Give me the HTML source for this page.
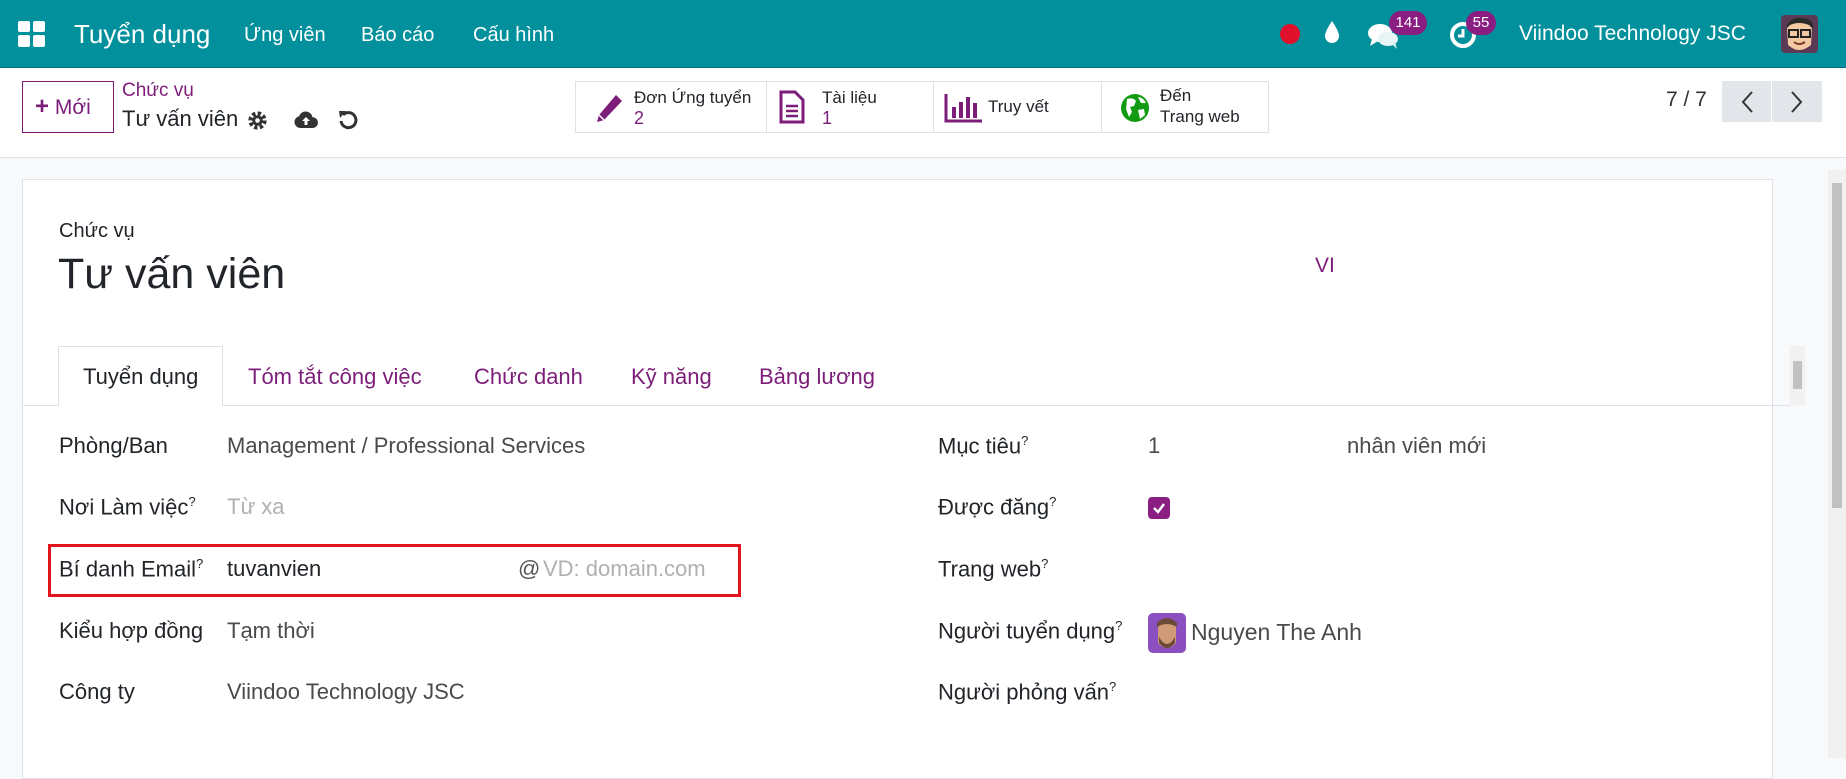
<!DOCTYPE html>
<html><head><meta charset="utf-8">
<style>
*{box-sizing:border-box;margin:0;padding:0}
body{width:1846px;height:758px;overflow:hidden;background:#f8f9fa;font-family:"Liberation Sans","Noto Sans CJK JP",sans-serif;color:#212529;position:relative}
.a{position:absolute;white-space:nowrap}
.nav{position:absolute;left:0;top:0;width:1846px;height:68px;background:#01909c;border-bottom:1px solid #0a6e77}
.nav .a{color:#fff}
.cp{position:absolute;left:0;top:68px;width:1846px;height:90px;background:#fff;border-bottom:1px solid #dee2e6}
.badge{position:absolute;background:#8a1d82;color:#fff;border-radius:12px;font-size:15px;text-align:center;height:24px;line-height:24px}
.stat{position:absolute;top:81px;height:52px;border:1px solid #dee2e6;background:#fff}
.stat .t{position:absolute;font-size:17px;color:#212529;white-space:nowrap}
.stat .n{position:absolute;font-size:18px;color:#7c1d7a}
.sheet{position:absolute;left:22px;top:179px;width:1751px;height:600px;background:#fff;border:1px solid #dee2e6}
.lbl{position:absolute;font-size:22px;color:#212529;white-space:nowrap}
.lbl sup{font-size:13px}
.val{position:absolute;font-size:22px;color:#4a4a4a;white-space:nowrap}
.tab{position:absolute;top:364px;font-size:22px;color:#7c1d7a;white-space:nowrap}
</style></head><body>
<div class="nav">
 <svg class="a" style="left:18px;top:21px" width="27" height="26" viewBox="0 0 27 26"><rect x="0" y="0" width="12" height="11" rx="2" fill="#fff"/><rect x="15" y="0" width="12" height="11" rx="2" fill="#fff"/><rect x="0" y="14" width="12" height="12" rx="2" fill="#fff"/><rect x="15" y="14" width="12" height="12" rx="2" fill="#fff"/></svg>
 <div class="a" style="left:74px;top:19px;font-size:26px">Tuyển dụng</div>
 <div class="a" style="left:244px;top:24px;font-size:20px">Ứng viên</div>
 <div class="a" style="left:361px;top:24px;font-size:20px">Báo cáo</div>
 <div class="a" style="left:473px;top:24px;font-size:20px">Cấu hình</div>
 <div class="a" style="left:1280px;top:24px;width:20px;height:20px;border-radius:50%;background:#e0112b"></div>
 <svg class="a" style="left:1323px;top:20px" width="18" height="26" viewBox="0 0 18 26"><path d="M9 1 C9 1 2 11 2 16 a7 7 0 0 0 14 0 C16 11 9 1 9 1Z" fill="#fff"/></svg>
 <svg class="a" style="left:1368px;top:22px" width="32" height="28" viewBox="0 0 32 28"><ellipse cx="12" cy="11" rx="12" ry="9" fill="#fff"/><path d="M4 17 L2 24 L10 19Z" fill="#fff"/><ellipse cx="20" cy="17" rx="10" ry="7" fill="#e6f4f5"/><path d="M24 22 L29 27 L27 20Z" fill="#e6f4f5"/></svg>
 <div class="badge" style="left:1389px;top:11px;width:38px">141</div>
 <svg class="a" style="left:1449px;top:21px" width="28" height="28" viewBox="0 0 28 28"><circle cx="14" cy="14" r="11" fill="none" stroke="#fff" stroke-width="4"/><path d="M14 8 V15 H9" stroke="#fff" stroke-width="3" fill="none"/></svg>
 <div class="badge" style="left:1466px;top:11px;width:30px">55</div>
 <div class="a" style="left:1519px;top:22px;font-size:21px">Viindoo Technology JSC</div>
 <div class="a" style="left:1781px;top:15px;width:37px;height:38px;border-radius:4px;background:#5a3a55;overflow:hidden">
  <svg width="37" height="38" viewBox="0 0 37 38"><path d="M6 12 Q18 0 31 12 L30 30 Q18 40 7 30Z" fill="#f2c9a0"/><path d="M5 14 Q8 2 20 3 Q33 3 32 14 L28 10 Q18 6 9 10Z" fill="#2a2a2a"/><rect x="8" y="15" width="9" height="7" fill="none" stroke="#222" stroke-width="2"/><rect x="20" y="15" width="9" height="7" fill="none" stroke="#222" stroke-width="2"/><path d="M13 27 Q18 31 24 27" stroke="#7a3b2e" stroke-width="2" fill="none"/></svg>
 </div>
</div>
<div class="cp">
 <div class="a" style="left:22px;top:13px;width:92px;height:52px;border:1px solid #7c1d7a;color:#7c1d7a;font-size:21px;line-height:50px;padding-left:12px"><b style="font-size:24px">+</b> Mới</div>
 <div class="a" style="left:122px;top:12px;font-size:19px;color:#7c1d7a">Chức vụ</div>
 <div class="a" style="left:122px;top:38px;font-size:22px;color:#212529">Tư vấn viên</div>
 <svg class="a" style="left:247px;top:42px" width="21" height="21" viewBox="0 0 20 20"><circle cx="10" cy="10" r="6.5" fill="none" stroke="#333" stroke-width="4.5" stroke-dasharray="3 2.1"/><circle cx="10" cy="10" r="5" fill="#333"/><circle cx="10" cy="10" r="2.2" fill="#fff"/></svg>
 <svg class="a" style="left:294px;top:42px" width="24" height="19" viewBox="0 0 24 19"><path d="M6 18 a6 6 0 0 1 -1 -11.8 a7 7 0 0 1 13.5 1 a5 5 0 0 1 0 10.8Z" fill="#333"/><path d="M12 7 L8 11 H10.5 V15 H13.5 V11 H16Z" fill="#fff"/></svg>
 <svg class="a" style="left:338px;top:41px" width="20" height="21" viewBox="0 0 20 21"><path d="M5 6 A7.5 7.5 0 1 1 3 12" fill="none" stroke="#333" stroke-width="3"/><path d="M1 2 L8 2 L2 9Z" fill="#333"/></svg>
</div>
<div class="stat" style="left:575px;width:192px">
 <svg class="a" style="left:18px;top:11px" width="30" height="32" viewBox="0 0 30 32"><path d="M22 2 L28 8 L10 27 L3 29 L5 22Z" fill="#7c1d7a"/><path d="M5 22 L10 27" stroke="#fff" stroke-width="1.5"/></svg>
 <div class="t" style="left:58px;top:6px">Đơn Ứng tuyển</div><div class="n" style="left:58px;top:26px">2</div>
</div>
<div class="stat" style="left:766px;width:168px">
 <svg class="a" style="left:12px;top:8px" width="26" height="34" viewBox="0 0 26 34"><path d="M2 2 H16 L24 10 V32 H2Z" fill="none" stroke="#7c1d7a" stroke-width="3"/><path d="M7 16 H19 M7 21 H19 M7 26 H19" stroke="#7c1d7a" stroke-width="2.5"/></svg>
 <div class="t" style="left:55px;top:6px">Tài liệu</div><div class="n" style="left:55px;top:26px">1</div>
</div>
<div class="stat" style="left:933px;width:169px">
 <svg class="a" style="left:10px;top:11px" width="40" height="30" viewBox="0 0 40 30"><path d="M2 1 V28 H38" stroke="#7c1d7a" stroke-width="3" fill="none"/><rect x="8" y="14" width="4" height="11" fill="#7c1d7a"/><rect x="15" y="9" width="4" height="16" fill="#7c1d7a"/><rect x="22" y="4" width="4" height="21" fill="#7c1d7a"/><rect x="29" y="10" width="4" height="15" fill="#7c1d7a"/></svg>
 <div class="t" style="left:54px;top:15px">Truy vết</div>
</div>
<div class="stat" style="left:1101px;width:168px">
 <svg class="a" style="left:18px;top:11px" width="30" height="30" viewBox="0 0 30 30"><circle cx="15" cy="15" r="14" fill="#129a12"/><path d="M7 6 Q13 4 16 8 L14 13 L10 14 L12 19 L9 24 L6 16Z M18 17 L24 16 L25 22 L20 26Z M18 4 Q24 5 26 10 L21 10Z" fill="#fff"/></svg>
 <div class="t" style="left:58px;top:4px">Đến</div><div class="t" style="left:58px;top:25px">Trang web</div>
</div>
<div class="a" style="left:1666px;top:88px;font-size:21px;color:#333">7 / 7</div>
<div class="a" style="left:1722px;top:81px;width:49px;height:41px;background:#e2e5e9"></div>
<div class="a" style="left:1772px;top:81px;width:50px;height:41px;background:#e2e5e9"></div>
<svg class="a" style="left:1740px;top:90px" width="14" height="24" viewBox="0 0 14 24"><path d="M12 2 L3 12 L12 22" stroke="#333" stroke-width="2" fill="none"/></svg>
<svg class="a" style="left:1790px;top:90px" width="14" height="24" viewBox="0 0 14 24"><path d="M2 2 L11 12 L2 22" stroke="#333" stroke-width="2" fill="none"/></svg>

<div class="sheet"></div>
<div class="a" style="left:59px;top:220px;font-size:20px">Chức vụ</div>
<div class="a" style="left:58px;top:250px;font-size:43px">Tư vấn viên</div>
<div class="a" style="left:1315px;top:254px;font-size:21px;color:#7c1d7a">VI</div>

<div class="a" style="left:23px;top:405px;width:1767px;height:1px;background:#dee2e6"></div>
<div class="a" style="left:58px;top:346px;width:165px;height:60px;background:#fff;border:1px solid #dee2e6;border-bottom:none"></div>
<div class="tab" style="left:83px;color:#212529">Tuyển dụng</div>
<div class="tab" style="left:248px">Tóm tắt công việc</div>
<div class="tab" style="left:474px">Chức danh</div>
<div class="tab" style="left:631px">Kỹ năng</div>
<div class="tab" style="left:759px">Bảng lương</div>
<div class="a" style="left:1790px;top:346px;width:15px;height:59px;background:#f1f1f1"></div>
<div class="a" style="left:1793px;top:361px;width:9px;height:28px;background:#c1c1c1"></div>
<div class="a" style="left:1828px;top:170px;width:18px;height:588px;background:#f1f1f1"></div>
<div class="a" style="left:1832px;top:183px;width:10px;height:325px;background:#c1c1c1"></div>

<div class="lbl" style="left:59px;top:433px">Phòng/Ban</div>
<div class="val" style="left:227px;top:433px">Management / Professional Services</div>
<div class="lbl" style="left:59px;top:494px">Nơi Làm việc<sup>?</sup></div>
<div class="val" style="left:227px;top:494px;color:#b0b0b0">Từ xa</div>
<div class="a" style="left:48px;top:544px;width:693px;height:53px;border:3px solid #e3141d"></div>
<div class="lbl" style="left:59px;top:556px">Bí danh Email<sup>?</sup></div>
<div class="val" style="left:227px;top:556px;color:#212529">tuvanvien</div>
<div class="val" style="left:518px;top:556px;color:#555">@</div>
<div class="val" style="left:543px;top:556px;color:#b0b0b0">VD: domain.com</div>
<div class="lbl" style="left:59px;top:618px">Kiểu hợp đồng</div>
<div class="val" style="left:227px;top:618px">Tạm thời</div>
<div class="lbl" style="left:59px;top:679px">Công ty</div>
<div class="val" style="left:227px;top:679px">Viindoo Technology JSC</div>

<div class="lbl" style="left:938px;top:433px">Mục tiêu<sup>?</sup></div>
<div class="val" style="left:1148px;top:433px">1</div>
<div class="val" style="left:1347px;top:433px">nhân viên mới</div>
<div class="lbl" style="left:938px;top:494px">Được đăng<sup>?</sup></div>
<div class="a" style="left:1148px;top:497px;width:22px;height:22px;border-radius:4px;background:#8a1f82"></div>
<svg class="a" style="left:1152px;top:501px" width="14" height="14" viewBox="0 0 14 14"><path d="M2 7 L6 11 L12 3" stroke="#fff" stroke-width="2.5" fill="none"/></svg>
<div class="lbl" style="left:938px;top:556px">Trang web<sup>?</sup></div>
<div class="lbl" style="left:938px;top:618px">Người tuyển dụng<sup>?</sup></div>
<div class="a" style="left:1148px;top:613px;width:38px;height:40px;border-radius:5px;background:#8c4fc0;overflow:hidden">
 <svg width="38" height="40" viewBox="0 0 38 40"><path d="M10 10 Q19 2 28 10 L28 30 Q19 40 10 30Z" fill="#d19a76"/><path d="M9 10 Q19 0 29 10 L29 14 Q19 8 9 14Z" fill="#6b4a3a"/><path d="M11 24 Q19 38 27 24 L27 30 Q19 40 11 30Z" fill="#6b4a3a"/></svg>
</div>
<div class="val" style="left:1191px;top:619px;font-size:23px">Nguyen The Anh</div>
<div class="lbl" style="left:938px;top:679px">Người phỏng vấn<sup>?</sup></div>
</body></html>
